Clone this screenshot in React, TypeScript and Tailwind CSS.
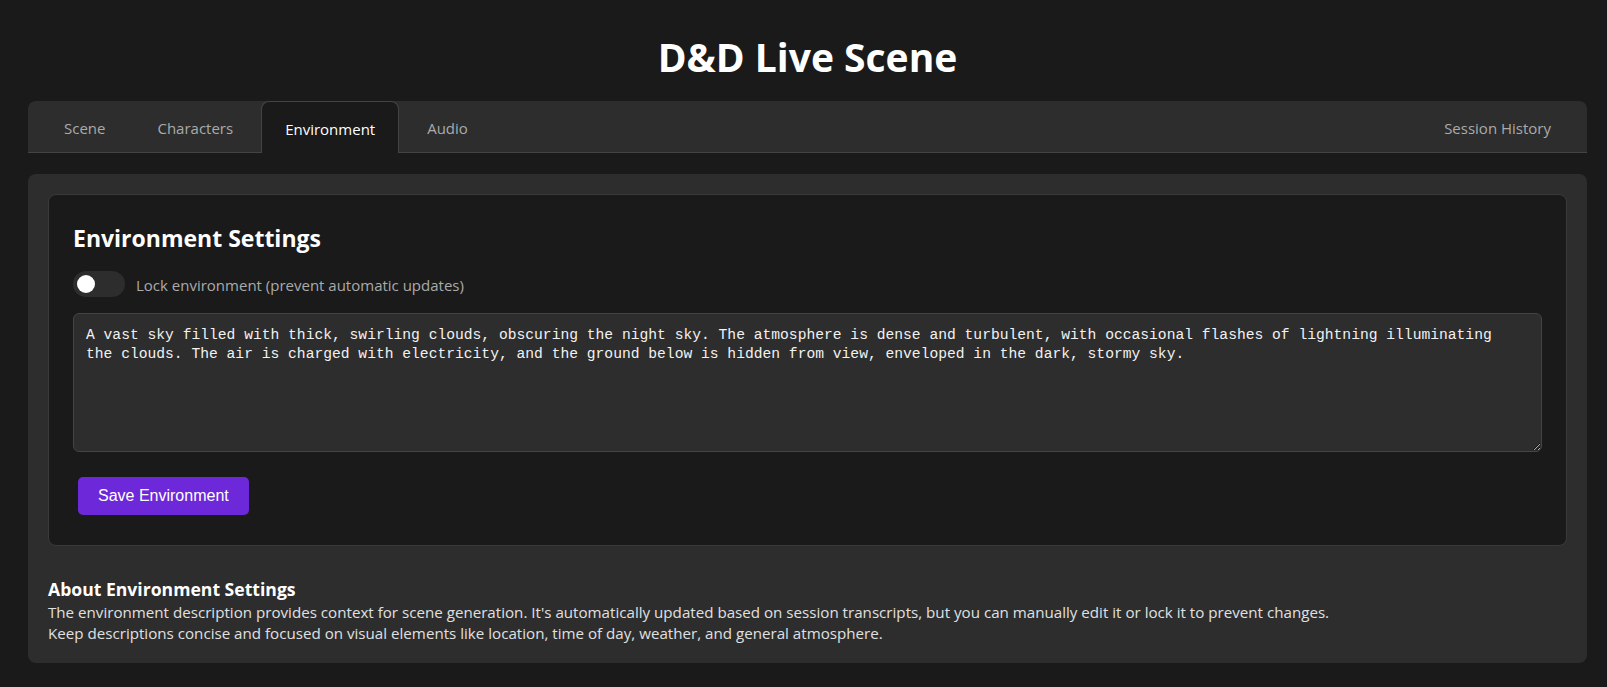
import { useState } from "react";

const tabs = ["Scene", "Characters", "Environment", "Audio"];

const initialText =
  "A vast sky filled with thick, swirling clouds, obscuring the night sky. The atmosphere is dense and turbulent, with occasional flashes of lightning illuminating the clouds. The air is charged with electricity, and the ground below is hidden from view, enveloped in the dark, stormy sky.";

export default function App() {
  const [active, setActive] = useState("Environment");
  const [locked, setLocked] = useState(false);
  const [text, setText] = useState(initialText);

  return (
    <div className="min-h-screen bg-[#1a1a1a] pl-[28px] pr-[20px] pt-[33px] font-['Open_Sans',sans-serif] text-white">
      <h1 className="mb-[20px] text-center text-[39px] font-bold leading-[48px]">
        D&amp;D Live Scene
      </h1>

      {/* tab bar */}
      <div className="flex h-[52px] items-stretch gap-1 rounded-t-lg border-b border-[#444] bg-[#2d2d2d] px-3">
        {tabs.map((t) => (
          <button
            key={t}
            onClick={() => setActive(t)}
            className={`flex items-center px-6 pt-[3px] text-[15px] ${
              t === active
                ? "mb-[-1px] rounded-t-lg border border-b-0 border-[#444] bg-[#1a1a1a] px-[23px] text-white"
                : "text-[#aaa]"
            }`}
          >
            {t}
          </button>
        ))}
        <button className="ml-auto flex items-center px-6 pt-[3px] text-[15px] text-[#aaa]">
          Session History
        </button>
      </div>

      <div className="mt-[21px] rounded-lg bg-[#2d2d2d] px-5 pb-[18px] pt-5">
        <div className="rounded-lg border border-[#3a3a3a] bg-[#1a1a1a] p-6">
          <h2 className="mt-[4px] text-[23px] font-bold leading-[30px]">
            Environment Settings
          </h2>

          <div className="mt-[18px] flex items-center gap-[11px]">
            <button
              onClick={() => setLocked(!locked)}
              className={`relative h-[26px] w-[52px] rounded-full ${
                locked ? "bg-[#6d28d9]" : "bg-[#2d2d2d]"
              }`}
            >
              <span
                className={`absolute top-[4px] h-[18px] w-[18px] rounded-full bg-white ${
                  locked ? "left-[30px]" : "left-[4px]"
                }`}
              />
            </button>
            <span className="mt-[3px] text-[15px] text-[#aaa]">
              Lock environment (prevent automatic updates)
            </span>
          </div>

          <textarea
            value={text}
            onChange={(e) => setText(e.target.value)}
            className="mt-[16px] block h-[139px] w-full rounded-md border border-[#444] bg-[#2d2d2d] py-3 pl-3 pr-4 font-['Liberation_Mono',monospace] text-[14.65px] leading-[19px] text-[#f2f2f2] outline-none"
          />

          <button className="mb-[6px] ml-[5px] mt-[25px] h-[38px] rounded-[5px] bg-[#6d28d9] px-5 font-['Liberation_Sans',Arial,sans-serif] text-[16px] text-white">
            Save Environment
          </button>
        </div>

        <h3 className="mt-[31px] text-[17.6px] font-bold leading-[25px]">
          About Environment Settings
        </h3>
        <p className="text-[15.15px] leading-[21.3px] text-[#e0e0e0]">
          The environment description provides context for scene generation.
          It's automatically updated based on session transcripts, but you can
          manually edit it or lock it to prevent changes.
          <br />
          Keep descriptions concise and focused on visual elements like
          location, time of day, weather, and general atmosphere.
        </p>
      </div>
    </div>
  );
}
